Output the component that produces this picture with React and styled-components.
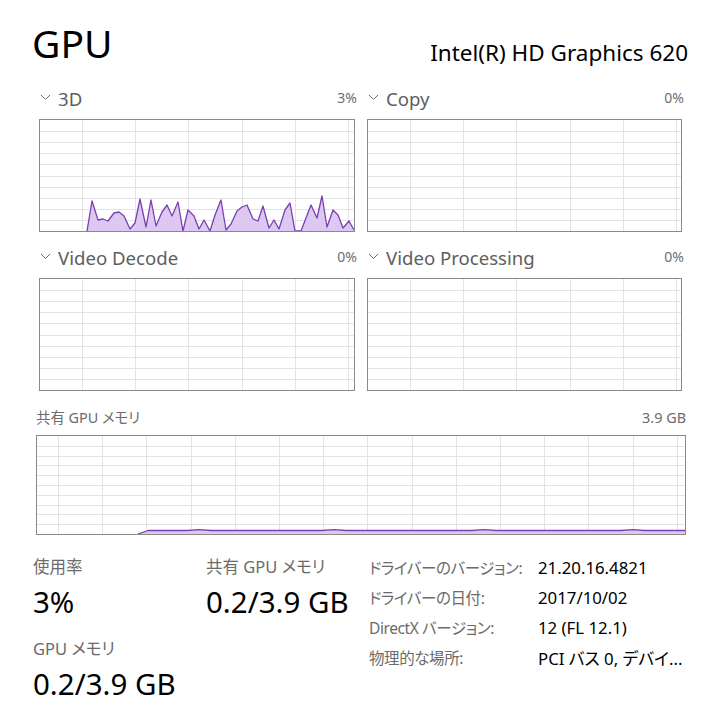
import React from "react";
import styled, { createGlobalStyle } from "styled-components";

const GlobalStyle = createGlobalStyle`
  html, body {
    margin: 0;
    padding: 0;
    background: #ffffff;
  }
  body {
    font-family: "Noto Sans", "Noto Sans CJK JP", sans-serif;
    font-feature-settings: "palt";
    color: #000;
  }
`;

const Page = styled.div`
  width: 723px;
  height: 714px;
  box-sizing: border-box;
  padding: 23px 37px 0 33px;
  overflow: hidden;
`;

const Header = styled.div`
  display: flex;
  justify-content: space-between;
  align-items: flex-start;
  margin-left: -1px;
  margin-right: -2px;
`;

const Title = styled.div`
  font-size: 39px;
  line-height: 1;
  color: #000;
`;

const Adapter = styled.div`
  margin-top: 19px;
  font-size: 22.5px;
  line-height: 1;
  color: #000;
`;

const EngineGrid = styled.div`
  display: grid;
  grid-template-columns: 316px 315px;
  column-gap: 12px;
  row-gap: 17px;
  margin-top: 25px;
  padding-left: 6px;
`;

const Engine = styled.div`
  display: flex;
  flex-direction: column;
`;

const EngineHead = styled.div`
  display: flex;
  justify-content: space-between;
  align-items: flex-start;
  height: 18px;
  margin-bottom: 11px;
`;

const EngineName = styled.div`
  display: flex;
  align-items: flex-start;
  font-size: 18.6px;
  line-height: 1;
  color: #5e5e5e;
`;

const Chevron = styled.svg`
  width: 11px;
  height: 7px;
  margin: 4px 7px 0 1px;
  flex: none;
`;

const Percent = styled.div`
  font-size: 14px;
  line-height: 1;
  margin-top: 1px;
  margin-right: -2px;
  color: #6e6e6e;
`;

const ChartBox = styled.div`
  height: ${(p) => p.$h}px;
  border: 1px solid #8a8a8a;
  box-sizing: border-box;
  background: #fff;
  display: flex;

  svg {
    display: block;
  }
`;

const MemoryBlock = styled.div`
  margin-top: 19px;
  padding-left: 3px;
`;

const MemoryHead = styled.div`
  display: flex;
  justify-content: space-between;
  align-items: flex-end;
  height: 16px;
  margin-bottom: 9px;
`;

const SmallLabel = styled.div`
  font-size: 14.4px;
  line-height: 1;
  color: #6b6b6b;
`;

const Stats = styled.div`
  display: grid;
  grid-template-columns: 173px 163px auto;
  margin-top: 18px;
`;

const StatCol = styled.div`
  display: flex;
  flex-direction: column;
  padding-top: 6px;
`;

const Stat = styled.div`
  display: flex;
  flex-direction: column;
  gap: 12px;
  margin-bottom: 24px;
`;

const StatLabel = styled.div`
  font-size: 16.5px;
  line-height: 1;
  color: #6b6b6b;
`;

const StatValue = styled.div`
  font-size: 29.5px;
  line-height: 1;
  color: #000;
`;

const InfoTable = styled.div`
  display: grid;
  grid-template-columns: 169px auto;
  grid-auto-rows: 30px;
  align-items: center;
`;

const InfoLabel = styled.div`
  font-size: 15.5px;
  letter-spacing: -0.4px;
  color: #6b6b6b;
  white-space: nowrap;
`;

const InfoValue = styled.div`
  font-size: 16.8px;
  color: #000;
  white-space: nowrap;
`;

const LINE = "#7b3fb2";
const FILL = "#dcc8f1";
const GRID = "#e4e4e4";

const Chart = ({ w, h, vOffset, vStep, points }) => {
  const iw = w - 2;
  const ih = h - 2;
  const verticals = [];
  for (let x = vOffset; x < iw; x += vStep) verticals.push(Math.round(x) + 0.5);
  const horizontals = [];
  for (let i = 1; i < 10; i++) horizontals.push(Math.round((ih / 10) * i) + 0.5);

  let line = null;
  let area = null;
  if (points && points.length) {
    const pts = points.map(([x, y]) => `${x},${y}`).join(" ");
    line = pts;
    area = `${points[0][0]},${ih} ${pts} ${points[points.length - 1][0]},${ih}`;
  }

  return (
    <ChartBox $h={h}>
      <svg width={iw} height={ih} viewBox={`0 0 ${iw} ${ih}`}>
        {horizontals.map((y) => (
          <line key={"h" + y} x1="0" x2={iw} y1={y} y2={y} stroke={GRID} strokeWidth="1" />
        ))}
        {verticals.map((x) => (
          <line key={"v" + x} x1={x} x2={x} y1="0" y2={ih} stroke={GRID} strokeWidth="1" />
        ))}
        {area && <polygon points={area} fill={FILL} />}
        {line && (
          <polyline points={line} fill="none" stroke={LINE} strokeWidth="1.3" strokeLinejoin="round" />
        )}
      </svg>
    </ChartBox>
  );
};

// 3D engine samples, in px inside the chart
const threeD = [
  [47, 111], [52, 81], [58, 100], [63, 99], [68, 101], [74, 93], [79, 92], [84, 96],
  [90, 109], [95, 103], [100, 79], [106, 107], [111, 80], [116, 106], [122, 92], [127, 85],
  [132, 96], [138, 82], [143, 111], [148, 90], [154, 96], [159, 109], [164, 100], [170, 111],
  [175, 95], [181, 80], [186, 110], [191, 104], [197, 91], [202, 87], [207, 85], [213, 99],
  [218, 101], [223, 86], [229, 108], [234, 100], [239, 109], [245, 90], [250, 83], [255, 111],
  [261, 111], [266, 98], [271, 85], [277, 98], [282, 76], [287, 107], [293, 90], [298, 95],
  [303, 108], [309, 101], [314, 110],
];

const memory = [
  [101, 98], [111, 94.5], [150, 94.5], [162, 93.6], [174, 94.5], [285, 94.5], [297, 93.6],
  [309, 94.5], [435, 94.5], [447, 93.6], [459, 94.5], [584, 94.5], [596, 93.6], [608, 94.5],
  [648, 94.5],
];

const Down = () => (
  <Chevron viewBox="0 0 11 7">
    <polyline points="1,1 5.5,5.5 10,1" fill="none" stroke="#6b6b6b" strokeWidth="1" />
  </Chevron>
);

const engines = [
  { name: "3D", pct: "3%", data: threeD, w: 316 },
  { name: "Copy", pct: "0%", data: null, w: 315 },
  { name: "Video Decode", pct: "0%", data: null, w: 316 },
  { name: "Video Processing", pct: "0%", data: null, w: 315 },
];

const info = [
  ["ドライバーのバージョン:", "21.20.16.4821"],
  ["ドライバーの日付:", "2017/10/02"],
  ["DirectX バージョン:", "12 (FL 12.1)"],
  ["物理的な場所:", "PCI バス 0, デバイ..."],
];

export default function App() {
  return (
    <>
      <GlobalStyle />
      <Page>
        <Header>
          <Title>GPU</Title>
          <Adapter>Intel(R) HD Graphics 620</Adapter>
        </Header>

        <EngineGrid>
          {engines.map((e) => (
            <Engine key={e.name}>
              <EngineHead>
                <EngineName>
                  <Down />
                  {e.name}
                </EngineName>
                <Percent>{e.pct}</Percent>
              </EngineHead>
              <Chart w={e.w} h={113} vOffset={42} vStep={53.2} points={e.data} />
            </Engine>
          ))}
        </EngineGrid>

        <MemoryBlock>
          <MemoryHead>
            <SmallLabel>共有 GPU メモリ</SmallLabel>
            <SmallLabel>3.9 GB</SmallLabel>
          </MemoryHead>
          <Chart w={650} h={100} vOffset={21} vStep={44.2} points={memory} />
        </MemoryBlock>

        <Stats>
          <StatCol>
            <Stat>
              <StatLabel>使用率</StatLabel>
              <StatValue>3%</StatValue>
            </Stat>
            <Stat>
              <StatLabel>GPU メモリ</StatLabel>
              <StatValue>0.2/3.9 GB</StatValue>
            </Stat>
          </StatCol>
          <StatCol>
            <Stat>
              <StatLabel>共有 GPU メモリ</StatLabel>
              <StatValue>0.2/3.9 GB</StatValue>
            </Stat>
          </StatCol>
          <InfoTable>
            {info.map(([k, v]) => (
              <React.Fragment key={k}>
                <InfoLabel>{k}</InfoLabel>
                <InfoValue>{v}</InfoValue>
              </React.Fragment>
            ))}
          </InfoTable>
        </Stats>
      </Page>
    </>
  );
}
